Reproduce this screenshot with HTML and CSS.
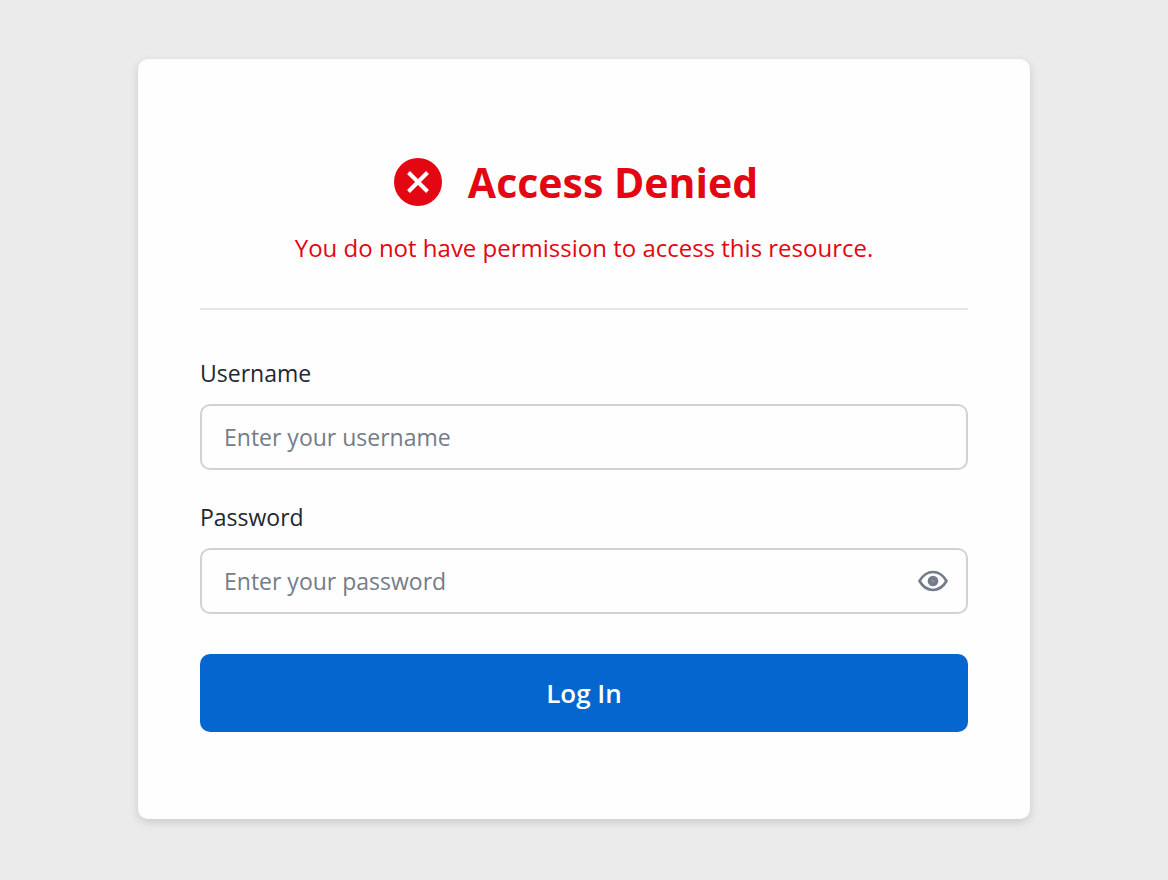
FILE: index.html
```html
<!DOCTYPE html>
<html lang="en">
<head>
    <meta charset="UTF-8">
    <meta name="viewport" content="width=device-width, initial-scale=1.0">
    <title>Access Denied</title>
    <link rel="stylesheet" href="styles.css">
</head>
<body>

<main class="card">
    <div class="heading">
        <svg class="error-icon" viewBox="0 0 48 48" aria-hidden="true">
            <circle cx="24" cy="24" r="24" fill="#e30613"/>
            <path d="M14.500 14.500l19 19M33.500 14.500l-19 19" stroke="#fff" stroke-width="4"/>
        </svg>
        <h1>Access Denied</h1>
    </div>
    <p class="message">You do not have permission to access this resource.</p>

    <form class="login-form">
        <label for="username">Username</label>
        <input type="text" id="username" placeholder="Enter your username">

        <label for="password">Password</label>
        <div class="password-field">
            <input type="password" id="password" placeholder="Enter your password">
            <button type="button" class="toggle" id="toggle" aria-label="Show password">
                <svg viewBox="0 0 30 22" aria-hidden="true">
                    <path d="M1.500 11C5 5 9.500 2 15 2s10 3 13.500 9c-3.500 6-8 9-13.500 9S5 17 1.500 11z" fill="none" stroke="#747c89" stroke-width="2.700" stroke-linejoin="round"/>
                    <circle cx="15" cy="11" r="5.300" fill="#747c89"/>
                    <circle cx="15" cy="11" r="1.500" fill="#8d939d"/>
                </svg>
            </button>
        </div>

        <button type="submit" class="submit">Log In</button>
    </form>
</main>

<script>
    document.getElementById("toggle").onclick = function () {
        const field = document.getElementById("password");
        field.type = field.type === "password" ? "text" : "password";
    };
</script>

</body>
</html>
```
FILE: styles.css
```css
* {
    box-sizing: border-box;
}
body {
    font-family: "Open Sans", "Noto Sans", sans-serif;
    background-color: #ebebeb;
    margin: 0;
    padding-bottom: 2px;
    min-height: 100vh;
    display: flex;
    align-items: center;
    justify-content: center;
}
.card {
    width: 100%;
    max-width: 892px;
    background: #fefefe;
    padding: 95px 62px 87px;
    border-radius: 10px;
    box-shadow: 0 3px 8px rgba(0, 0, 0, 0.14);
}
.heading {
    display: flex;
    align-items: center;
    justify-content: center;
    gap: 26px;
    padding-right: 16px;
}
.error-icon {
    width: 48px;
    height: 48px;
}
h1 {
    margin: 0;
    font-size: 41px;
    line-height: 56px;
    font-weight: 700;
    color: #e30613;
}
.message {
    margin: 0;
    padding: 20px 0 42px;
    border-bottom: 2px solid #e5e6e8;
    font-size: 24px;
    line-height: 36px;
    text-align: center;
    color: #e30613;
}
.login-form {
    display: flex;
    flex-direction: column;
    padding-top: 46px;
}
label {
    margin-bottom: 14px;
    font-size: 23px;
    line-height: 34px;
    font-weight: 500;
    color: #1f2733;
}
input {
    width: 100%;
    height: 66px;
    margin-bottom: 30px;
    padding: 0 22px;
    border: 2px solid #d0d2d6;
    border-radius: 10px;
    background: #fefefe;
    font-family: inherit;
    font-size: 23px;
    color: #1f2733;
}
input::placeholder {
    color: #747c89;
    opacity: 1;
}
.password-field {
    position: relative;
    margin-bottom: 40px;
}
.password-field input {
    display: block;
    margin: 0;
    padding-right: 70px;
}
.toggle {
    position: absolute;
    top: 0;
    right: 20px;
    height: 100%;
    padding: 0;
    border: none;
    background: none;
    cursor: pointer;
}
.toggle svg {
    display: block;
    width: 30px;
    height: 22px;
}
.submit {
    height: 78px;
    border: none;
    border-radius: 10px;
    background-color: #0566cf;
    color: white;
    font-family: inherit;
    font-size: 26px;
    font-weight: 600;
    cursor: pointer;
}
```
